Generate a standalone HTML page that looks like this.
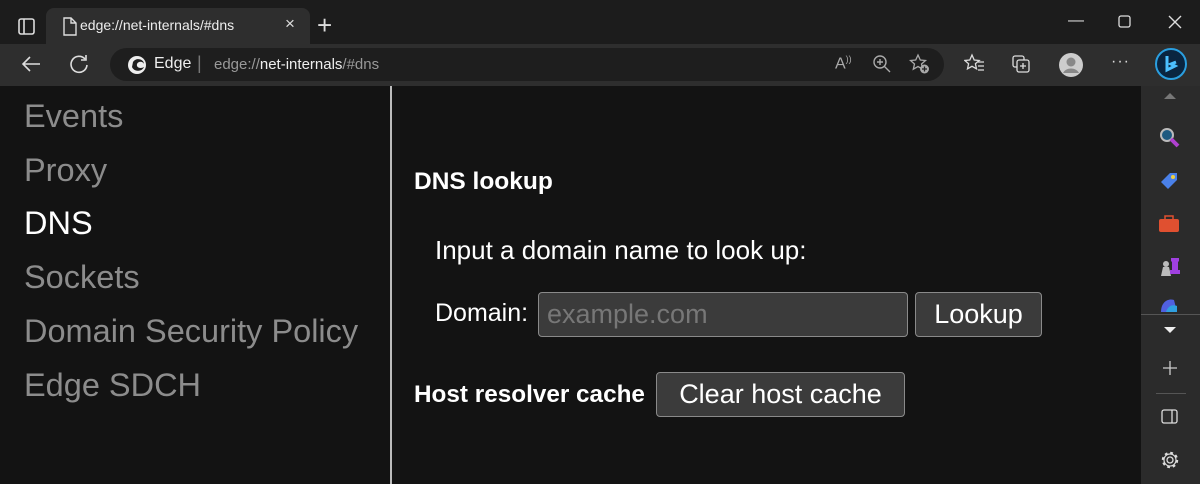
<!DOCTYPE html>
<html><head><meta charset="utf-8"><style>
*{margin:0;padding:0;box-sizing:border-box}
body{width:1200px;height:484px;background:#131313;font-family:"Liberation Sans",sans-serif;position:relative;overflow:hidden;color:#fff}
.abs{position:absolute}
.title{left:0;top:0;width:1200px;height:44px;background:#1c1c1c}
.tab{left:46px;top:8px;width:264px;height:36px;background:#2e2e2e;border-radius:8px 8px 0 0}
.toolbar{left:0;top:44px;width:1200px;height:42px;background:#2e2e2e}
.addr{left:110px;top:48px;width:834px;height:33px;background:#1e1e1e;border-radius:17px}
.side{left:1141px;top:86px;width:59px;height:398px;background:#2b2b2b}
.nav{left:24px;font-size:32.5px;color:#8c8c8c;line-height:36px}
.btn{background:#3b3b3b;border:1px solid #8a8a8a;border-radius:4px;color:#fff;font-size:27px;text-align:center;line-height:42px}
svg{position:absolute}
</style></head><body>
<div class="abs title"></div>
<div class="abs tab"></div>
<div class="abs toolbar"></div>
<div class="abs addr"></div>
<div class="abs side"></div>
<svg style="left:18px;top:18px" width="18" height="18"><rect x="1" y="1" width="15" height="15" rx="2" fill="none" stroke="#ddd" stroke-width="1.6"/><line x1="6" y1="1" x2="6" y2="16" stroke="#ddd" stroke-width="1.6"/></svg>
<svg style="left:62px;top:17px" width="16" height="20"><path d="M2 1h7l5 5v12H2z M9 1v5h5" fill="none" stroke="#ddd" stroke-width="1.4"/></svg>
<div class="abs" style="left:80px;top:17px;font-size:14px;color:#eee">edge://net-internals/#dns</div>
<div class="abs" style="left:285px;top:14px;font-size:17px;color:#ddd">×</div>
<div class="abs" style="left:317px;top:10px;font-size:26px;color:#ddd;font-weight:300">+</div>
<div class="abs" style="left:1068px;top:12px;font-size:16px;color:#ddd">—</div>
<svg style="left:1118px;top:15px" width="14" height="14"><rect x="1" y="1" width="11" height="11" rx="2" fill="none" stroke="#ddd" stroke-width="1.3"/></svg>
<svg style="left:1167px;top:14px" width="16" height="16"><path d="M2 2L14 14M14 2L2 14" stroke="#ddd" stroke-width="1.4"/></svg>
<svg style="left:20px;top:54px" width="22" height="20"><path d="M20 10H3M10 3L3 10l7 7" fill="none" stroke="#ddd" stroke-width="1.6"/></svg>
<svg style="left:68px;top:53px" width="22" height="22"><path d="M17 6A8 8 0 1 0 19 12" fill="none" stroke="#ddd" stroke-width="1.6"/><path d="M18 2v5h-5" fill="none" stroke="#ddd" stroke-width="1.6"/></svg>
<svg style="left:127px;top:55px" width="20" height="20"><circle cx="10" cy="10" r="9" fill="#eee"/><path d="M5 12c2 5 10 5 12 0-3 2-8 1-7-3 1-3 6-3 7 0 0-5-8-7-11-2z" fill="#1e1e1e"/></svg>
<div class="abs" style="left:154px;top:55px;font-size:16px;color:#eee">Edge</div>
<div class="abs" style="left:197px;top:53px;font-size:18px;color:#777">|</div>
<div class="abs" style="left:214px;top:56px;font-size:15px;color:#999">edge://<span style="color:#eee">net-internals</span>/#dns</div>
<div class="abs" style="left:835px;top:54px;font-size:16px;color:#aaa">A<sup style="font-size:9px">))</sup></div>
<svg style="left:872px;top:54px" width="20" height="20"><circle cx="8" cy="8" r="6" fill="none" stroke="#aaa" stroke-width="1.4"/><path d="M12.5 12.5L18 18M5 8h6M8 5v6" stroke="#aaa" stroke-width="1.4"/></svg>
<svg style="left:909px;top:53px" width="22" height="22"><path d="M9 2l2.3 5 5.2.5-4 3.5 1.2 5.2L9 13.5 4.3 16.2 5.5 11 1.5 7.5l5.2-.5z" fill="none" stroke="#aaa" stroke-width="1.3"/><circle cx="15.5" cy="16" r="4.5" fill="#aaa"/><path d="M15.5 13.5v5M13 16h5" stroke="#222" stroke-width="1.3"/></svg>
<svg style="left:964px;top:53px" width="22" height="22"><path d="M8 2l2.2 5 5 .5-3.8 3.3 1.1 5L8 13.3 3.5 15.8l1.1-5L.8 7.5l5-.5z" fill="none" stroke="#ddd" stroke-width="1.3"/><path d="M14 9h6M14 13h6M14 17h6" stroke="#ddd" stroke-width="1.3"/></svg>
<svg style="left:1011px;top:53px" width="22" height="22"><rect x="2" y="3" width="11" height="11" rx="2" fill="none" stroke="#ddd" stroke-width="1.3"/><rect x="6" y="7" width="12" height="12" rx="2" fill="#2e2e2e" stroke="#ddd" stroke-width="1.3"/><path d="M12 10v6M9 13h6" stroke="#ddd" stroke-width="1.3"/></svg>
<svg style="left:1058px;top:52px" width="26" height="26"><circle cx="13" cy="13" r="12" fill="#ccc"/><circle cx="13" cy="10" r="4.5" fill="#888"/><path d="M5 21c3-6 13-6 16 0" fill="#888"/></svg>
<div class="abs" style="left:1111px;top:53px;font-size:16px;color:#ddd;letter-spacing:1px">···</div>
<svg style="left:1153px;top:47px" width="36" height="36"><circle cx="18" cy="17" r="15" fill="#0a2540" stroke="#2a9fe0" stroke-width="2"/><path d="M14 9v14l8-4-4-2 5-2" fill="none" stroke="#4cc0ff" stroke-width="3"/></svg>
<div class="abs" style="left:1164px;top:93px;width:0;height:0;border-left:6px solid transparent;border-right:6px solid transparent;border-bottom:6px solid #777"></div>
<svg style="left:1159px;top:127px" width="22" height="22"><circle cx="8" cy="8" r="6" fill="#1e5a80" stroke="#bbb" stroke-width="2"/><path d="M12 12l7 7" stroke="#b040d0" stroke-width="4"/></svg>
<svg style="left:1158px;top:170px" width="22" height="22"><path d="M3 12L12 3h7v7l-9 9z" fill="#4a80e8"/><circle cx="15" cy="7" r="2" fill="#f0d040"/></svg>
<svg style="left:1158px;top:215px" width="22" height="18"><rect x="1" y="4" width="20" height="13" rx="2" fill="#e05030"/><rect x="7" y="1" width="8" height="4" fill="none" stroke="#e05030" stroke-width="1.5"/></svg>
<svg style="left:1158px;top:254px" width="24" height="24"><circle cx="8" cy="10" r="3" fill="#bbb"/><path d="M3 22l2-9h6l2 9z" fill="#bbb"/><path d="M13 4h8v3l-1 1v8h2v4h-10v-4h2V8l-1-1z" fill="#a040e0"/></svg>
<svg style="left:1158px;top:296px" width="22" height="16"><path d="M3 16C3 6 10 2 16 4L19 16z" fill="#5060e0"/><path d="M8 16c2-6 6-8 11-6v6z" fill="#30a0e0"/></svg>
<div class="abs" style="left:1141px;top:314px;width:59px;height:1px;background:#555"></div>
<div class="abs" style="left:1164px;top:327px;width:0;height:0;border-left:6px solid transparent;border-right:6px solid transparent;border-top:6px solid #eee"></div>
<svg style="left:1162px;top:360px" width="16" height="16"><path d="M8 1v14M1 8h14" stroke="#ccc" stroke-width="1.3"/></svg>
<div class="abs" style="left:1156px;top:393px;width:30px;height:1px;background:#555"></div>
<svg style="left:1161px;top:409px" width="18" height="16"><rect x="1" y="1" width="15" height="13" rx="2" fill="none" stroke="#ddd" stroke-width="1.3"/><line x1="11" y1="1" x2="11" y2="14" stroke="#ddd" stroke-width="1.3"/></svg>
<svg style="left:1160px;top:450px" width="20" height="20"><circle cx="10" cy="10" r="3" fill="none" stroke="#ddd" stroke-width="1.3"/><circle cx="10" cy="10" r="7" fill="none" stroke="#ddd" stroke-width="2.4" stroke-dasharray="2.7 2.8"/><circle cx="10" cy="10" r="6" fill="none" stroke="#ddd" stroke-width="1.2"/></svg>
<div class="abs" style="left:390px;top:86px;width:2px;height:398px;background:#bbb"></div>
<div class="abs nav" style="top:98px">Events</div>
<div class="abs nav" style="top:152px">Proxy</div>
<div class="abs nav" style="top:205px;color:#fff">DNS</div>
<div class="abs nav" style="top:259px">Sockets</div>
<div class="abs nav" style="top:313px">Domain Security Policy</div>
<div class="abs nav" style="top:367px">Edge SDCH</div>
<div class="abs" style="left:414px;top:168px;font-size:24.5px;font-weight:bold">DNS lookup</div>
<div class="abs" style="left:435px;top:235px;font-size:26px">Input a domain name to look up:</div>
<div class="abs" style="left:435px;top:299px;font-size:25px">Domain:</div>
<div class="abs btn" style="left:538px;top:292px;width:370px;height:45px;text-align:left;padding-left:8px;color:#777">example.com</div>
<div class="abs btn" style="left:915px;top:292px;width:127px;height:45px">Lookup</div>
<div class="abs" style="left:414px;top:381px;font-size:24.3px;font-weight:bold">Host resolver cache</div>
<div class="abs btn" style="left:656px;top:372px;width:249px;height:45px">Clear host cache</div>
</body></html>
